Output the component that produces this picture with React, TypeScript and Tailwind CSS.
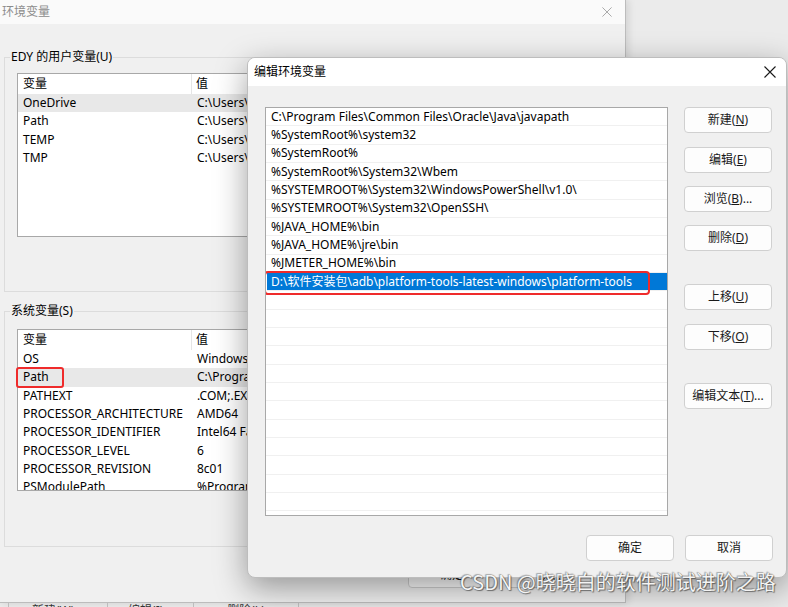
import React from "react";

const userVars: [string, string][] = [
  ["OneDrive", "C:\\Users\\EDY\\OneDrive"],
  ["Path", "C:\\Users\\EDY\\AppData\\Local\\Microsoft\\WindowsApps;"],
  ["TEMP", "C:\\Users\\EDY\\AppData\\Local\\Temp"],
  ["TMP", "C:\\Users\\EDY\\AppData\\Local\\Temp"],
];

const sysVars: [string, string][] = [
  ["OS", "Windows_NT"],
  ["Path", "C:\\Program Files\\Common Files\\Oracle\\Java\\javapath;"],
  ["PATHEXT", ".COM;.EXE;.BAT;.CMD;.VBS;.VBE;.JS;.JSE;.WSF;.WSH;.MSC"],
  ["PROCESSOR_ARCHITECTURE", "AMD64"],
  ["PROCESSOR_IDENTIFIER", "Intel64 Family 6 Model 140 Stepping 1"],
  ["PROCESSOR_LEVEL", "6"],
  ["PROCESSOR_REVISION", "8c01"],
  ["PSModulePath", "%ProgramFiles%\\WindowsPowerShell\\Modules;"],
];

const paths = [
  "C:\\Program Files\\Common Files\\Oracle\\Java\\javapath",
  "%SystemRoot%\\system32",
  "%SystemRoot%",
  "%SystemRoot%\\System32\\Wbem",
  "%SYSTEMROOT%\\System32\\WindowsPowerShell\\v1.0\\",
  "%SYSTEMROOT%\\System32\\OpenSSH\\",
  "%JAVA_HOME%\\bin",
  "%JAVA_HOME%\\jre\\bin",
  "%JMETER_HOME%\\bin",
  "D:\\软件安装包\\adb\\platform-tools-latest-windows\\platform-tools",
];

function CloseX({ size, color, stroke }: { size: number; color: string; stroke: number }) {
  return (
    <svg width={size} height={size} viewBox="0 0 12 12">
      <path d="M0.5 0.5 L11.5 11.5 M11.5 0.5 L0.5 11.5" stroke={color} strokeWidth={stroke} />
    </svg>
  );
}

function VarList({
  rows,
  height,
  highlight,
  redBox,
}: {
  rows: [string, string][];
  height: string;
  highlight: number;
  redBox?: boolean;
}) {
  return (
    <div className="relative w-[590px]">
      <div className={`bg-white border border-[#a8a8a8] w-[590px] overflow-hidden ${height}`}>
        <div className="flex h-[20px] items-center">
          <div className="w-[174px] h-full pl-[5px] flex items-center border-r border-[#e5e5e5]">变量</div>
          <div className="pl-[4px]">值</div>
        </div>
        {rows.map(([k, v], i) => (
          <div
            key={k}
            className={`flex h-[18.3px] items-center whitespace-nowrap ${i === highlight ? "bg-[#e8e8e8]" : ""}`}
          >
            <div className="w-[175px] pl-[5px] h-full flex items-center">{k}</div>
            <div className="pl-[4px]">{v}</div>
          </div>
        ))}
      </div>
      {redBox && (
        <span className="absolute left-[-1px] top-[38px] w-[48px] h-[21px] border-2 border-[#ef2b2b] rounded-[3px]" />
      )}
    </div>
  );
}

function Btn({ children, className = "" }: { children: React.ReactNode; className?: string }) {
  return (
    <div
      className={`h-[26px] w-[88px] flex items-center justify-center bg-[#fdfdfd] border border-[#d0d0d0] rounded-[4px] text-[12px] text-[#1a1a1a] ${className}`}
    >
      {children}
    </div>
  );
}

export default function App() {
  const emptyRows = Array.from({ length: 12 });
  return (
    <div className="relative w-[788px] h-[607px] overflow-hidden bg-[#ebebeb] font-['Noto_Sans','Noto_Sans_CJK_SC',sans-serif] text-[12px] text-black">
      {/* Main window: 环境变量 */}
      <div className="w-[626px] h-[603px] bg-[#f0f0f0] border-r border-b border-[#bcbcbc] shadow-[2px_0_8px_rgba(0,0,0,0.12)] flex flex-col">
        <div className="h-[24px] bg-[#fafafa] flex items-center justify-between pl-[2px] pr-[13px]">
          <span className="text-[#8c8c8c] text-[12px]">环境变量</span>
          <CloseX size={10} color="#9a9a9a" stroke={1} />
        </div>
        <div className="pl-[4px] flex flex-col">
          <fieldset className="mt-[24px] w-[612px] border border-[#dcdcdc] pt-[7px] pb-[54px]">
            <legend className="ml-[5px] px-[1px] leading-[18px] text-[12px]">EDY 的用户变量(U)</legend>
            <div className="pl-[12px]">
              <VarList rows={userVars} height="h-[164px]" highlight={0} />
            </div>
          </fieldset>
          <fieldset className="mt-[10px] w-[612px] border border-[#dcdcdc] pt-[9px] pb-[55px]">
            <legend className="ml-[5px] px-[1px] leading-[18px] text-[12px]">系统变量(S)</legend>
            <div className="pl-[12px]">
              <VarList rows={sysVars} height="h-[162px]" highlight={1} redBox />
            </div>
          </fieldset>
          <div className="mt-[15px] flex gap-[9px] pl-[404px]">
            <Btn>确定</Btn>
            <Btn>取消</Btn>
          </div>
        </div>
      </div>
      {/* strip of window behind */}
      <div className="h-[4px] overflow-hidden flex text-[12px] leading-[14px] text-[#333]">
        <div className="w-[8px]" />
        <div className="w-[99px] border-l border-[#bdbdbd] flex justify-center pt-[1px]">新建(W)...</div>
        <div className="w-[86px] border-l border-[#bdbdbd] flex justify-center pt-[1px]">编辑(I)...</div>
        <div className="w-[105px] border-l border-[#bdbdbd] flex justify-center pt-[1px]">删除(L)</div>
        <div className="w-[10px] border-l border-[#bdbdbd]" />
      </div>

      {/* Dialog: 编辑环境变量 */}
      <div className="absolute left-[247px] top-[57px] w-[540px] h-[521px] rounded-[8px] bg-[#f0f0f0] border border-[#bdbdbd] shadow-[0_10px_32px_rgba(0,0,0,0.38)] overflow-hidden flex flex-col">
        <div className="h-[28px] bg-white flex items-center justify-between pl-[6px] pr-[10px]">
          <span className="text-[12px] text-black">编辑环境变量</span>
          <CloseX size={12} color="#1a1a1a" stroke={1.1} />
        </div>
        <div className="flex pl-[17px] pt-[21px]">
          <div className="w-[403px] h-[409px] bg-white border border-[#a8a8a8] overflow-hidden">
            {paths.map((p, i) => {
              const sel = i === paths.length - 1;
              return (
                <div
                  key={p}
                  className={`relative h-[18.33px] flex items-center whitespace-nowrap border-b border-[#f0f0f0] ${
                    sel ? "bg-[#0078d7] text-white border-[#0078d7] ml-[1px] pl-[4px]" : "pl-[5px]"
                  }`}
                >
                  {p}
                  {sel && (
                    <span className="absolute left-[-3px] top-[-2px] w-[386px] h-[24px] border-[2.5px] border-[#ef2b2b] rounded-[4px]" />
                  )}
                </div>
              );
            })}
            {emptyRows.map((_, i) => (
              <div key={i} className="h-[18.33px] border-b border-[#f0f0f0]" />
            ))}
          </div>
          <div className="ml-[16px] flex flex-col">
            <Btn>
              新建(<span className="underline">N</span>)
            </Btn>
            <Btn className="mt-[14px]">
              编辑(<span className="underline">E</span>)
            </Btn>
            <Btn className="mt-[13px]">
              浏览(<span className="underline">B</span>)...
            </Btn>
            <Btn className="mt-[13px]">
              删除(<span className="underline">D</span>)
            </Btn>
            <Btn className="mt-[33px]">
              上移(<span className="underline">U</span>)
            </Btn>
            <Btn className="mt-[14px]">
              下移(<span className="underline">O</span>)
            </Btn>
            <Btn className="mt-[33px]">
              编辑文本(<span className="underline">T</span>)...
            </Btn>
          </div>
        </div>
        <div className="flex justify-end gap-[11px] pr-[13px] mt-[19px]">
          <Btn className="w-[87px]">确定</Btn>
          <Btn>取消</Btn>
        </div>
      </div>

      {/* watermark */}
      <div className="absolute left-[460px] top-[569px] text-[20px] leading-[26px] text-[#f4f4f4] font-['Noto_Sans_CJK_SC',sans-serif] [text-shadow:0_0_1px_#555,1px_1px_1px_rgba(0,0,0,0.45),-1px_-1px_1px_rgba(0,0,0,0.25)]">
        CSDN @晓晓白的软件测试进阶之路
      </div>
    </div>
  );
}
